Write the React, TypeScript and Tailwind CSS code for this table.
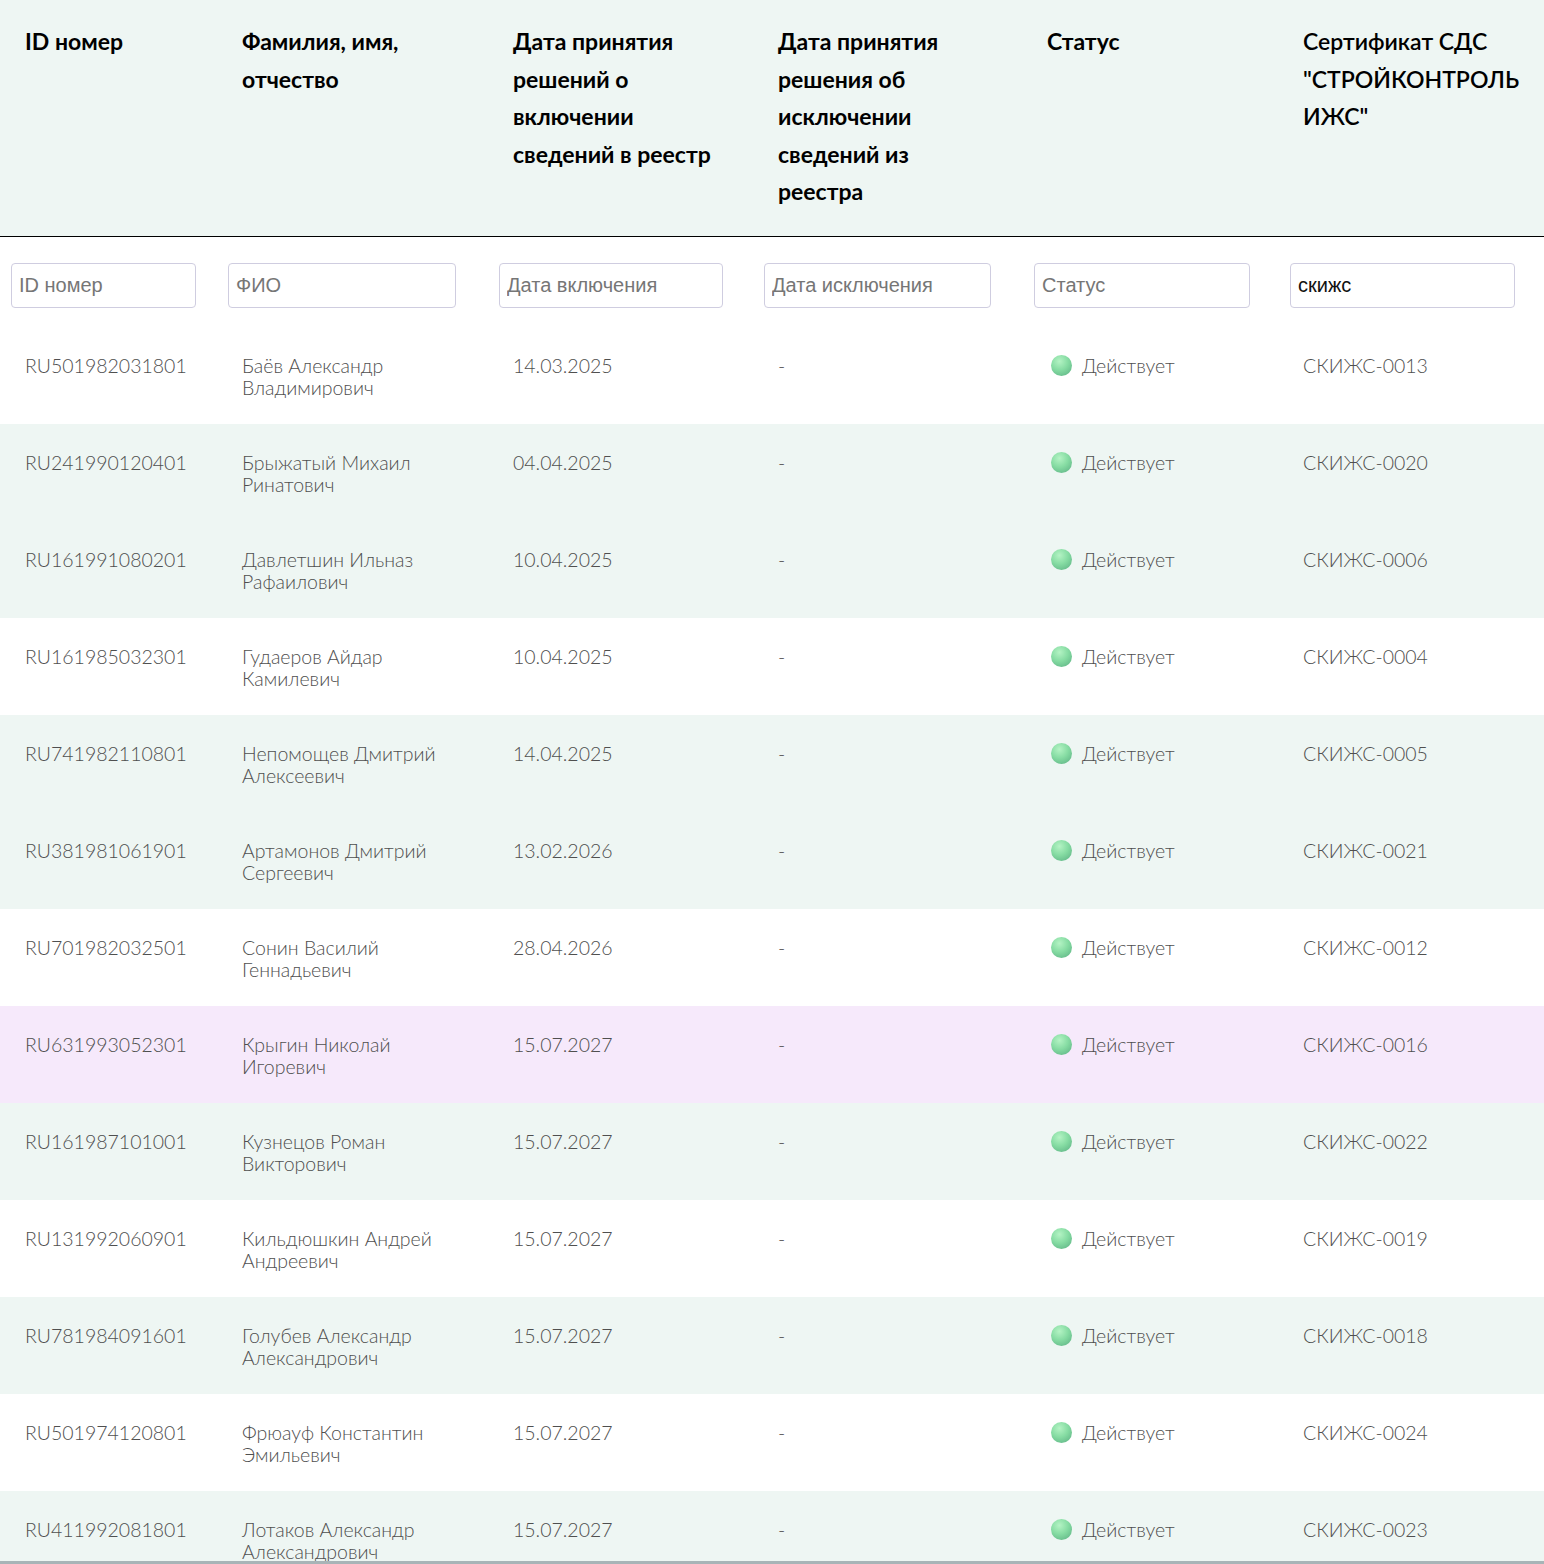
import { useState } from 'react';

type Row = {
  id: string;
  last: string;
  middle: string;
  date: string;
  cert: string;
  tone: 'white' | 'green' | 'pink';
};

const rows: Row[] = [
  { id: 'RU501982031801', last: 'Баёв Александр', middle: 'Владимирович', date: '14.03.2025', cert: 'СКИЖС-0013', tone: 'white' },
  { id: 'RU241990120401', last: 'Брыжатый Михаил', middle: 'Ринатович', date: '04.04.2025', cert: 'СКИЖС-0020', tone: 'green' },
  { id: 'RU161991080201', last: 'Давлетшин Ильназ', middle: 'Рафаилович', date: '10.04.2025', cert: 'СКИЖС-0006', tone: 'green' },
  { id: 'RU161985032301', last: 'Гудаеров Айдар', middle: 'Камилевич', date: '10.04.2025', cert: 'СКИЖС-0004', tone: 'white' },
  { id: 'RU741982110801', last: 'Непомощев Дмитрий', middle: 'Алексеевич', date: '14.04.2025', cert: 'СКИЖС-0005', tone: 'green' },
  { id: 'RU381981061901', last: 'Артамонов Дмитрий', middle: 'Сергеевич', date: '13.02.2026', cert: 'СКИЖС-0021', tone: 'green' },
  { id: 'RU701982032501', last: 'Сонин Василий', middle: 'Геннадьевич', date: '28.04.2026', cert: 'СКИЖС-0012', tone: 'white' },
  { id: 'RU631993052301', last: 'Крыгин Николай', middle: 'Игоревич', date: '15.07.2027', cert: 'СКИЖС-0016', tone: 'pink' },
  { id: 'RU161987101001', last: 'Кузнецов Роман', middle: 'Викторович', date: '15.07.2027', cert: 'СКИЖС-0022', tone: 'green' },
  { id: 'RU131992060901', last: 'Кильдюшкин Андрей', middle: 'Андреевич', date: '15.07.2027', cert: 'СКИЖС-0019', tone: 'white' },
  { id: 'RU781984091601', last: 'Голубев Александр', middle: 'Александрович', date: '15.07.2027', cert: 'СКИЖС-0018', tone: 'green' },
  { id: 'RU501974120801', last: 'Фрюауф Константин', middle: 'Эмильевич', date: '15.07.2027', cert: 'СКИЖС-0024', tone: 'white' },
  { id: 'RU411992081801', last: 'Лотаков Александр', middle: 'Александрович', date: '15.07.2027', cert: 'СКИЖС-0023', tone: 'green' },
];

const toneClass = {
  white: 'bg-white',
  green: 'bg-[#eef6f3]',
  pink: 'bg-[#f6e9fb]',
};

const grid = 'grid grid-cols-[217px_271px_265px_270px_256px_265px]';

function FilterInput({ placeholder, width, value, focus }: { placeholder: string; width: string; value?: string; focus?: boolean }) {
  const [text, setText] = useState(value ?? '');
  return (
    <input
      value={text}
      autoFocus={focus}
      onChange={(e) => setText(e.target.value)}
      placeholder={placeholder}
      className={`${width} h-[45px] rounded-[4px] border border-[#cfcde0] bg-white px-[7px] text-[20px] font-normal text-[#111] placeholder:text-[#767676] outline-none caret-black font-['Liberation_Sans',Arial,sans-serif]`}
    />
  );
}

export default function App() {
  return (
    <div className="h-[1564px] overflow-hidden bg-white flex flex-col font-['Lato','Noto_Sans',sans-serif]">
      <div className="flex-1 overflow-hidden">
        {/* Header */}
        <div className={`${grid} h-[237px] bg-[#eef6f3] border-b border-black text-[23px] font-bold leading-[37.5px] text-black`}>
          <div className="pl-[25px] pt-[23px]">ID номер</div>
          <div className="pl-[25px] pt-[23px]">Фамилия, имя,<br />отчество</div>
          <div className="pl-[25px] pt-[23px]">Дата принятия<br />решений о<br />включении<br />сведений в реестр</div>
          <div className="pl-[25px] pt-[23px]">Дата принятия<br />решения об<br />исключении<br />сведений из<br />реестра</div>
          <div className="pl-[24px] pt-[23px]">Статус</div>
          <div className="pl-[24px] pt-[23px] font-semibold">Сертификат СДС<br />"СТРОЙКОНТРОЛЬ<br />ИЖС"</div>
        </div>

        {/* Filters */}
        <div className={`${grid} h-[90px] pt-[26px]`}>
          <div className="pl-[11px]"><FilterInput placeholder="ID номер" width="w-[185px]" /></div>
          <div className="pl-[11px]"><FilterInput placeholder="ФИО" width="w-[228px]" /></div>
          <div className="pl-[11px]"><FilterInput placeholder="Дата включения" width="w-[224px]" /></div>
          <div className="pl-[11px]"><FilterInput placeholder="Дата исключения" width="w-[227px]" /></div>
          <div className="pl-[11px]"><FilterInput placeholder="Статус" width="w-[216px]" /></div>
          <div className="pl-[11px]"><FilterInput placeholder="" width="w-[225px]" value="скижс" focus /></div>
        </div>

        {/* Rows */}
        {rows.map((row) => (
          <div
            key={row.id}
            className={`${grid} h-[97px] pt-[28px] text-[19.5px] font-light leading-[22px] text-[#4f4f4f] ${toneClass[row.tone]}`}
          >
            <div className="pl-[25px]">{row.id}</div>
            <div className="pl-[25px]">
              <div>{row.last}</div>
              <div>{row.middle}</div>
            </div>
            <div className="pl-[25px]">{row.date}</div>
            <div className="pl-[25px]">-</div>
            <div className="pl-[28px] flex items-start gap-[10px]">
              <span className="mt-[0px] h-[21px] w-[21px] shrink-0 rounded-full bg-[radial-gradient(circle_at_40%_30%,#b4f3c4_0%,#86dca3_45%,#58ad80_100%)]" />
              <span>Действует</span>
            </div>
            <div className="pl-[24px]">{row.cert}</div>
          </div>
        ))}
      </div>
      <div className="h-[3px] bg-[#a8b4b7]" />
    </div>
  );
}
